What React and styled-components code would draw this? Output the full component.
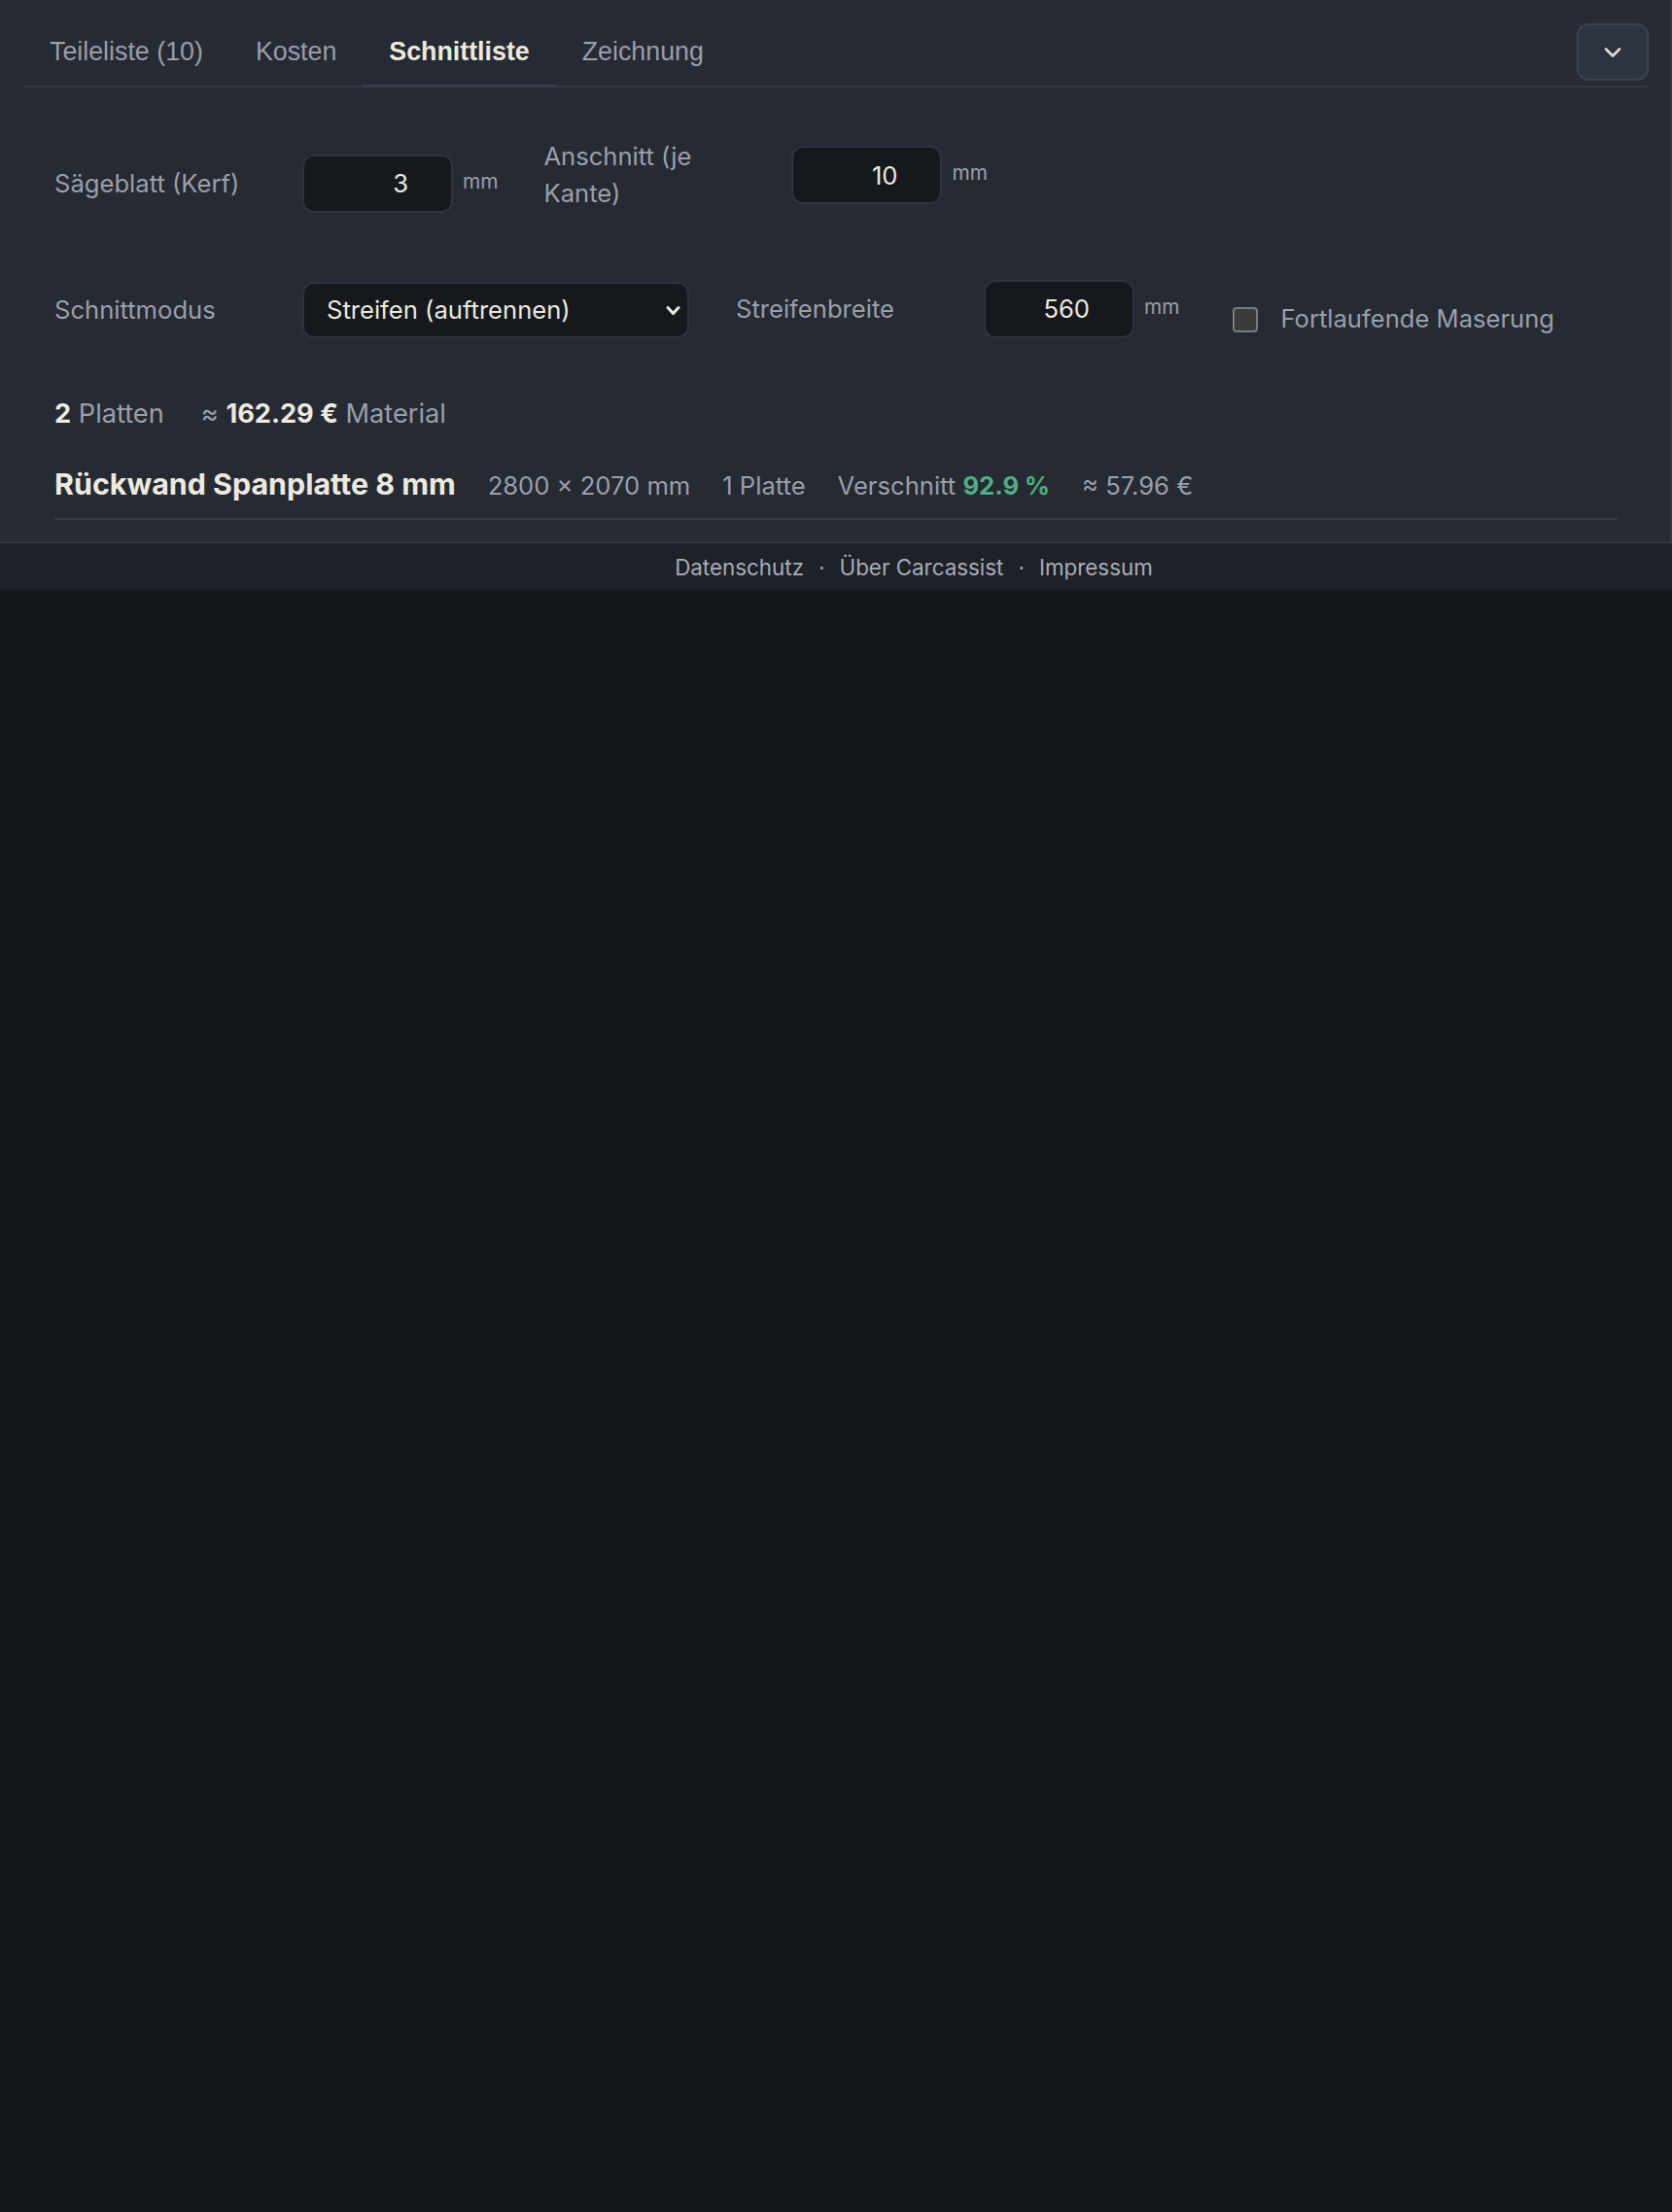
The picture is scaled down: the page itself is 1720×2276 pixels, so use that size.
import React from "react";
import styled, { createGlobalStyle } from "styled-components";

const GlobalStyle = createGlobalStyle`
  html, body {
    margin: 0;
    padding: 0;
    background: #14171c;
    font-family: Inter, "Noto Sans", sans-serif;
  }
  * { box-sizing: border-box; }
`;

const Panel = styled.section`
  background: #262a33;
  border-right: 2px solid #343844;
  border-bottom: 2px solid #343844;
  padding: 24px 22px 22px 24px;
`;

const TabBar = styled.div`
  display: flex;
  align-items: flex-start;
  border-bottom: 2px solid #323744;
  height: 66px;
`;

const Tab = styled.button`
  font-family: "Liberation Sans", Arial, sans-serif;
  font-size: 26.8px;
  line-height: 30px;
  padding: 14px 27px 19px;
  margin: 0 0 -2px;
  background: none;
  border: none;
  border-bottom: 3px solid ${(p) => (p.$active ? "#383d4b" : "transparent")};
  color: ${(p) => (p.$active ? "#ece9df" : "#9a9dab")};
  font-weight: ${(p) => (p.$active ? 700 : 400)};
  cursor: pointer;
`;

const ToggleButton = styled.button`
  margin-left: auto;
  width: 74px;
  height: 59px;
  border-radius: 12px;
  background: #2d3340;
  border: 2px solid #3b4150;
  color: #dcd9cf;
  display: flex;
  align-items: center;
  justify-content: center;
  padding: 0;
`;

const Content = styled.div`
  padding: 52px 32px 0;
`;

const Form = styled.div`
  display: flex;
  flex-direction: column;
  gap: 69px;
`;

const FormRow = styled.div`
  display: flex;
  flex-wrap: wrap;
  align-items: flex-end;
  column-gap: ${(p) => p.$gap || 47}px;
`;

const Field = styled.div`
  display: flex;
  align-items: center;
  margin-left: ${(p) => p.$shift || 0}px;
`;

const Label = styled.label`
  width: 224px;
  margin-right: 31px;
  font-size: 25.6px;
  line-height: 38.4px;
  color: #9b9fab;
`;

const InputGroup = styled.div`
  display: flex;
  align-items: flex-start;
`;

const NumberInput = styled.input`
  width: 155px;
  height: 60px;
  background: #15181d;
  border: 2px solid #2e333f;
  border-radius: 12px;
  color: #ece9df;
  font-family: Inter, sans-serif;
  font-size: 25.6px;
  text-align: right;
  padding: 0 44px 0 12px;
  outline: none;
`;

const Unit = styled.span`
  margin: 15px 0 0 10px;
  font-size: 20.8px;
  color: #9b9fab;
`;

const SelectWrap = styled.div`
  position: relative;
  width: 398px;
  height: 58px;
`;

const Select = styled.select`
  appearance: none;
  width: 100%;
  height: 100%;
  background: #15181d;
  border: 2px solid #2e333f;
  border-radius: 12px;
  color: #ece9df;
  font-family: Inter, sans-serif;
  font-size: 25.6px;
  padding: 0 40px 0 23px;
  outline: none;
`;

const SelectArrow = styled.svg`
  position: absolute;
  right: 8px;
  top: 50%;
  transform: translateY(-45%);
  pointer-events: none;
`;

const CheckLabel = styled.label`
  display: flex;
  align-items: center;
  gap: 23px;
  font-size: 25.6px;
  line-height: 38.4px;
  color: #9b9fab;
`;

const CheckBox = styled.span`
  width: 26px;
  height: 26px;
  border-radius: 4px;
  background: #3b3b3c;
  border: 2px solid #7b7c7e;
  display: inline-block;
`;

const Summary = styled.div`
  margin-top: 58px;
  display: flex;
  gap: 38px;
  font-size: 27.2px;
  line-height: 40.8px;
  color: #9b9fab;
`;

const Strong = styled.b`
  color: #ece9df;
  font-weight: 700;
`;

const PartHeader = styled.div`
  margin-top: 29px;
  display: flex;
  align-items: baseline;
  gap: 33px;
  padding-bottom: 12px;
  border-bottom: 2px solid #343845;
  font-size: 25.6px;
  color: #9b9fab;
`;

const PartTitle = styled.h3`
  margin: 0;
  font-size: 30.4px;
  line-height: 45.6px;
  font-weight: 700;
  color: #ece9df;
`;

const Waste = styled.b`
  color: #4fae85;
  font-weight: 700;
`;

const Footer = styled.footer`
  height: 48px;
  background: #1f2128;
  display: flex;
  align-items: center;
  justify-content: center;
  padding-left: 160px;
  font-size: 22.4px;
  color: #a8acb6;
`;

const FooterLink = styled.a`
  color: inherit;
  text-decoration: none;
`;

const Dot = styled.span`
  margin: 0 15px;
`;

export default function App() {
  return (
    <>
      <GlobalStyle />
      <Panel>
        <TabBar>
          <Tab>Teileliste (10)</Tab>
          <Tab>Kosten</Tab>
          <Tab $active>Schnittliste</Tab>
          <Tab>Zeichnung</Tab>
          <ToggleButton aria-label="Ausklappen">
            <svg width="28" height="28" viewBox="0 0 24 24" fill="none" stroke="currentColor" strokeWidth="2.4" strokeLinecap="round" strokeLinejoin="round">
              <path d="m6 9 6 6 6-6" />
            </svg>
          </ToggleButton>
        </TabBar>
        <Content>
          <Form>
            <FormRow>
              <Field>
                <Label>Sägeblatt (Kerf)</Label>
                <InputGroup>
                  <NumberInput type="text" defaultValue="3" />
                  <Unit>mm</Unit>
                </InputGroup>
              </Field>
              <Field>
                <Label>Anschnitt (je Kante)</Label>
                <InputGroup>
                  <NumberInput type="text" defaultValue="10" />
                  <Unit>mm</Unit>
                </InputGroup>
              </Field>
            </FormRow>
            <FormRow $gap={48}>
              <Field>
                <Label>Schnittmodus</Label>
                <SelectWrap>
                  <Select defaultValue="streifen">
                    <option value="streifen">Streifen (auftrennen)</option>
                    <option value="frei">Frei (Guillotine)</option>
                  </Select>
                  <SelectArrow width="17" height="12" viewBox="0 0 17 12" fill="none" stroke="#ece9df" strokeWidth="3" strokeLinecap="round" strokeLinejoin="round">
                    <path d="M3 3l5.5 6L14 3" />
                  </SelectArrow>
                </SelectWrap>
              </Field>
              <Field>
                <Label>Streifenbreite</Label>
                <InputGroup>
                  <NumberInput type="text" defaultValue="560" />
                  <Unit>mm</Unit>
                </InputGroup>
              </Field>
              <Field $shift={7}>
                <CheckLabel>
                  <CheckBox />
                  Fortlaufende Maserung
                </CheckLabel>
              </Field>
            </FormRow>
          </Form>
          <Summary>
            <span><Strong>2</Strong> Platten</span>
            <span>≈ <Strong>162.29 €</Strong> Material</span>
          </Summary>
          <PartHeader>
            <PartTitle>Rückwand Spanplatte 8 mm</PartTitle>
            <span>2800 × 2070 mm</span>
            <span>1 Platte</span>
            <span>Verschnitt <Waste>92.9 %</Waste></span>
            <span>≈ 57.96 €</span>
          </PartHeader>
        </Content>
      </Panel>
      <Footer>
        <FooterLink href="#">Datenschutz</FooterLink>
        <Dot>·</Dot>
        <FooterLink href="#">Über Carcassist</FooterLink>
        <Dot>·</Dot>
        <FooterLink href="#">Impressum</FooterLink>
      </Footer>
    </>
  );
}
